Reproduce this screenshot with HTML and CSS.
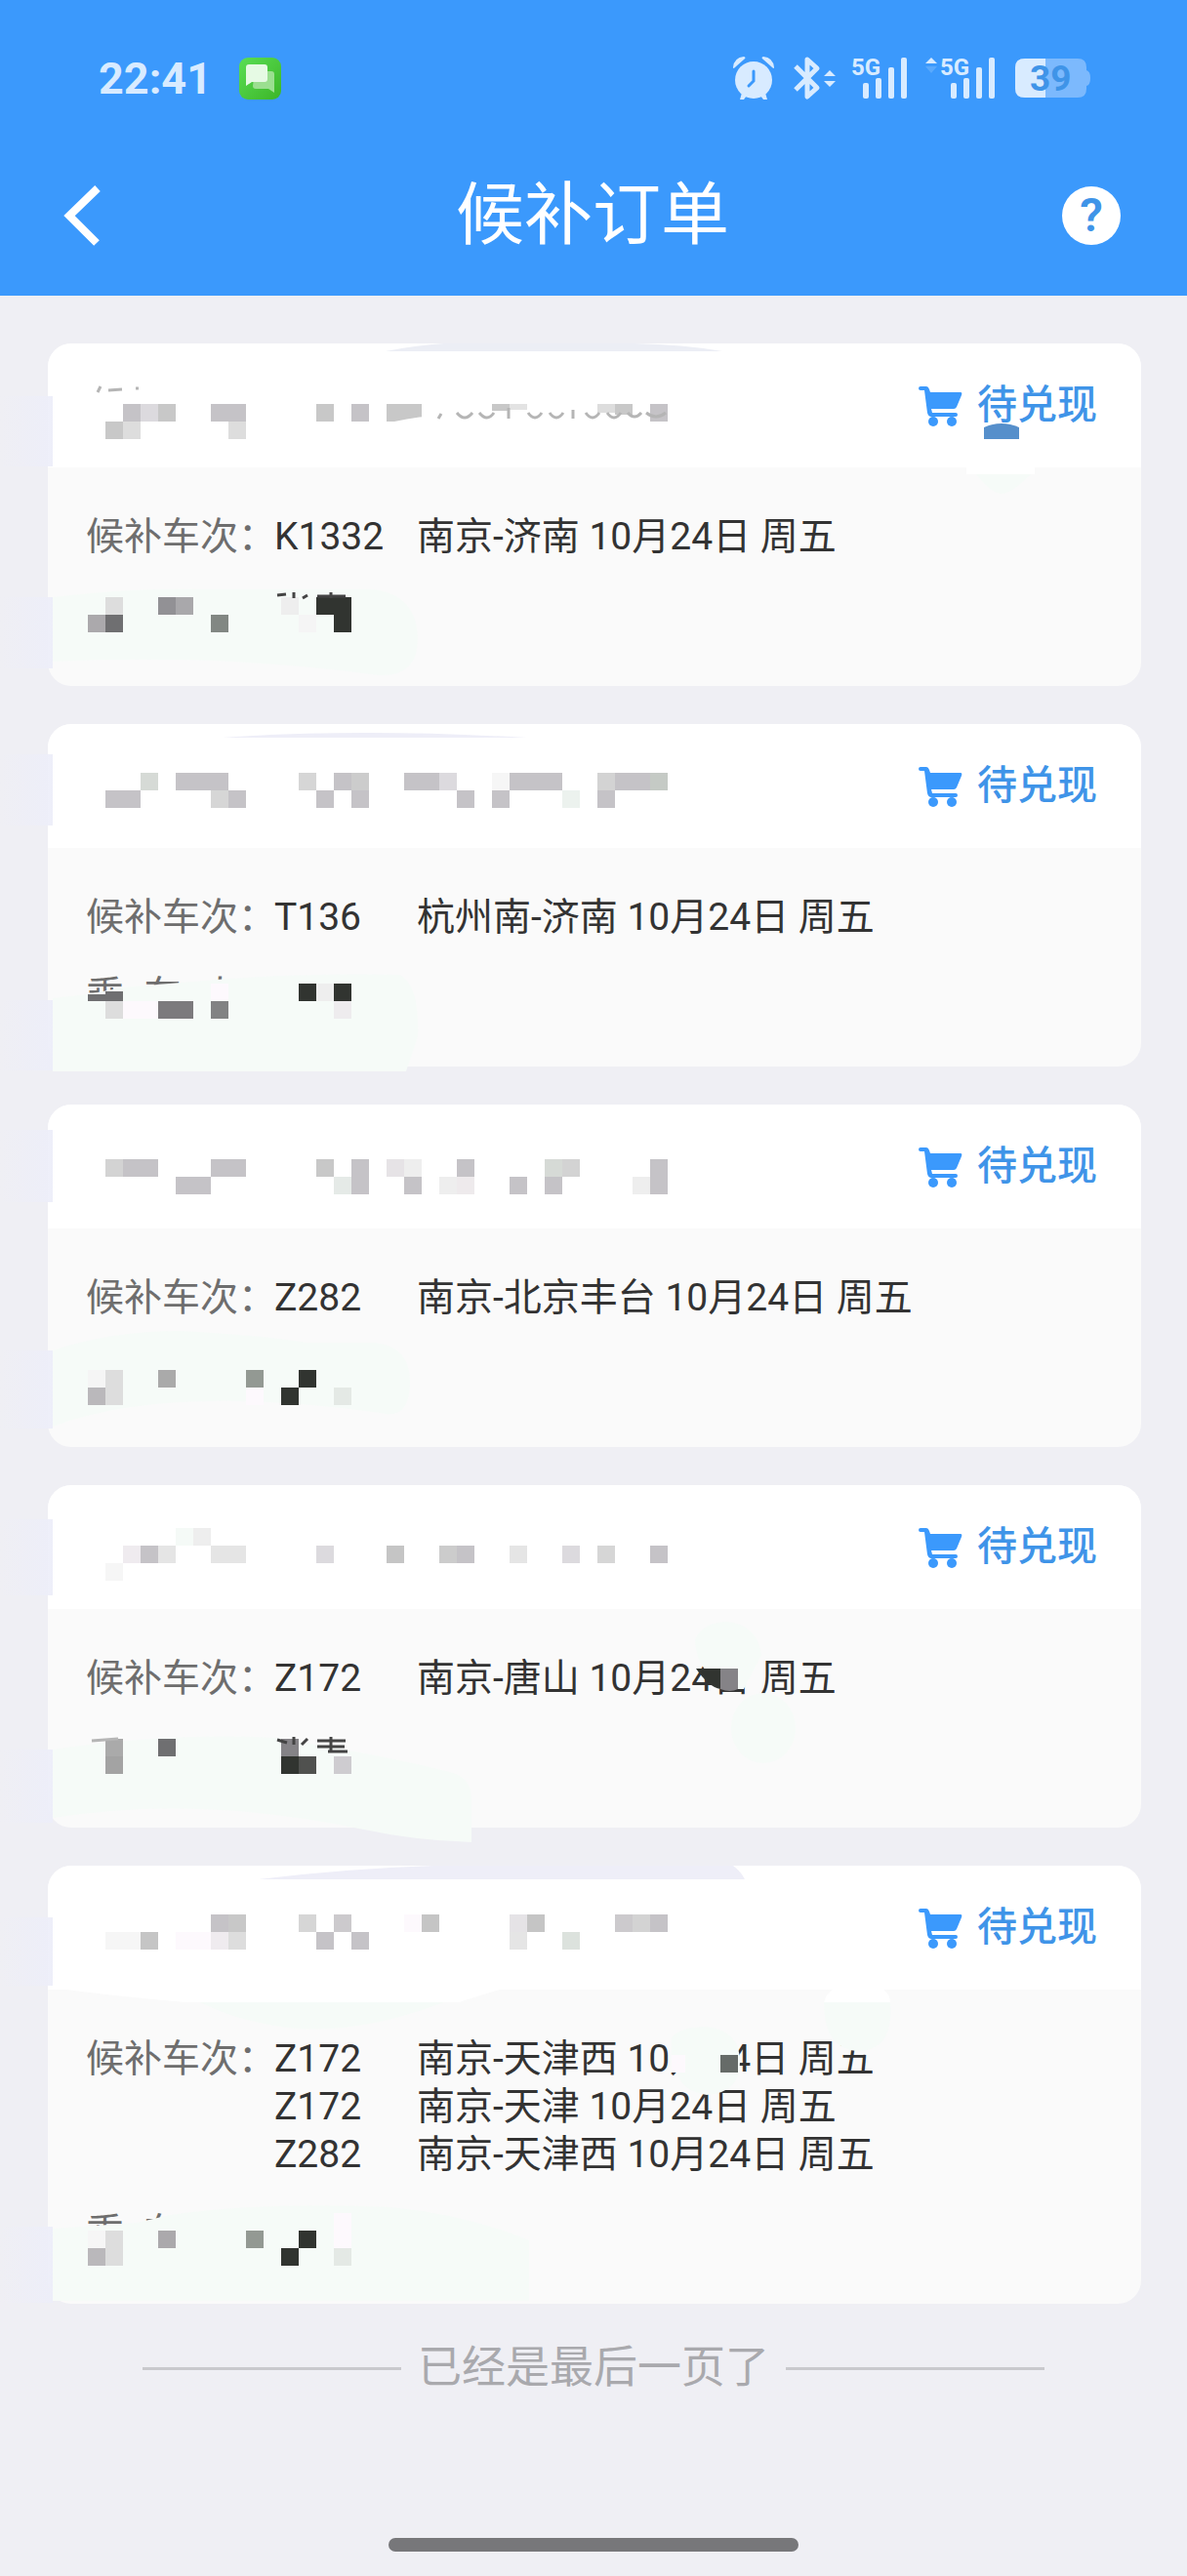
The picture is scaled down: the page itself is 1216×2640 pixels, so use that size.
FILE: index.html
```html
<!DOCTYPE html>
<html lang="zh-CN">

<head>
    <meta charset="UTF-8">
    <meta name="viewport" content="width=device-width, initial-scale=1.0">
    <title>候补订单</title>
    <link rel="stylesheet" href="styles.css">
</head>

<body>
    <!-- 图标定义 -->
    <svg class="defs" aria-hidden="true">
        <defs>
            <symbol id="cart" viewBox="0 0 45 42">
                <path d="M2 1h6q2 0 3 3l1 3h31q2 0 1 3l-5 12q-1 2-3 2H13l1 4h24q2 0 2 2t-2 2H13q-3 0-4-4L6 5H2Q0 5 0 3t2-2z" />
                <circle cx="15" cy="37" r="5" />
                <circle cx="34" cy="37" r="5" />
            </symbol>
            <symbol id="bars" viewBox="0 0 46 42">
                <rect x="0" y="26" width="6" height="16" rx="2" />
                <rect x="13" y="21" width="6" height="21" rx="2" />
                <rect x="26" y="10" width="6" height="32" rx="2" />
                <rect x="39" y="0" width="6" height="42" rx="2" />
            </symbol>
            <linearGradient id="green" x1="0" y1="0" x2="1" y2="1">
                <stop offset="0" stop-color="#5ade55" />
                <stop offset="1" stop-color="#3cb527" />
            </linearGradient>
            <linearGradient id="haze" x1="0" x2="1">
                <stop offset="0" stop-color="#edeef9" stop-opacity="0" />
                <stop offset="1" stop-color="#edeef9" />
            </linearGradient>
        </defs>
    </svg>

    <header class="top">
        <div class="status">
            <span class="time">22:41</span>
            <svg class="msg" width="43" height="43" viewBox="0 0 43 43">
                <rect width="43" height="43" rx="9" fill="url(#green)" />
                <path d="M16 14h17q3 0 3 3v19l-6-4H17q-3 0-3-3z" fill="#9bdf90" />
                <path d="M10 7h16q3 0 3 3v12q0 3-3 3H13l-6 4V10q0-3 3-3z" fill="#e6fae4" />
            </svg>
            <div class="status-right">
                <svg class="alarm" width="44" height="44" viewBox="0 0 44 44">
                    <circle cx="22" cy="24" r="19" />
                    <path d="M1 11Q2 1 12 0q3 1 0 3L3 11q-2 2-2 0zM43 11Q42 1 32 0q-3 1 0 3l9 8q2 2 2 0zM10 37l5 3-3 4H8zM34 37l-5 3 3 4h4z" />
                    <path d="M22 15v10l-5 5" fill="none" stroke="#3b99fc" stroke-width="3" stroke-linecap="round" />
                </svg>
                <svg class="bt" width="44" height="44" viewBox="0 0 44 44">
                    <path d="M2 10l22 22-10 9V3l10 9L2 34" fill="none" stroke="#d8ebff" stroke-width="5" stroke-linejoin="round" />
                    <path d="M31 20l6-6 6 6zM31 25h12l-6 6z" />
                </svg>
                <svg class="sim" width="58" height="44" viewBox="0 0 58 44">
                    <text x="0" y="19">5G</text>
                    <use href="#bars" x="12" y="1" width="46" height="42" />
                </svg>
                <svg class="sim sim2" width="72" height="44" viewBox="0 0 72 44">
                    <path d="M0 7l6-6 6 6z" />
                    <path d="M0 10h12l-6 7z" opacity=".2" />
                    <text x="15" y="19">5G</text>
                    <use href="#bars" x="26" y="1" width="46" height="42" />
                </svg>
                <svg class="battery" width="78" height="40" viewBox="0 0 78 40">
                    <path d="M10 0h54q9 0 9 9v3q4 1 4 8t-4 8v3q0 9-9 9H10q-10 0-10-9V9q0-9 10-9z" fill="#7cb9fd" />
                    <path d="M31 0v40H10Q0 40 0 31V9q0-9 10-9z" fill="#d8ebff" />
                    <text x="15" y="33">39</text>
                </svg>
            </div>
        </div>
        <nav class="navbar">
            <button class="back" aria-label="返回">
                <svg width="40" height="56" viewBox="0 0 40 56">
                    <path d="M34 0L5 28l28 28" fill="none" stroke="#fff" stroke-width="8" />
                </svg>
            </button>
            <h1>候补订单</h1>
            <button class="help" aria-label="帮助">?</button>
        </nav>
    </header>

    <main class="orders">
        <section class="card">
            <div class="card-head">
                <svg class="cart"><use href="#cart" /></svg>
                <span>待兑现</span>
            </div>
            <div class="card-body">
                <div class="row">
                    <span class="label">候补车次：</span>
                    <span class="train">K1332</span>
                    <span>南京-济南 10月24日 周五</span>
                </div>
            </div>
            <svg class="cover" aria-hidden="true">
                <g transform="translate(-49 -352)">
                    <path d="M395 360q30-6 60-8h195q50 1 90 8z" fill="#eceef5" />
                    <path d="M0 406h54v72H0zM0 612h54v73H0z" fill="url(#haze)" />
                    <path d="M54 612q80-10 160-8h150q62-4 64 50 0 40-40 38-160-22-334-14z" fill="#f6fbf8" />
                    <path d="M990 478h70v8h-70z" fill="#fff" />
                    <path d="M1000 486h56q-20 20-30 20t-26-20z" fill="#f6fbf8" />
                    <g data-mosaic="0"></g>
                    <path d="M1008 450v-12q18-8 36 0v12z" fill="#568fcb" />
                    <path d="M404 432q26-6 50-6v6z" fill="#fff" />
                    <path d="M452 424l-3 5M468 423q8 10 16 0M491 423q8 10 15 0M521 418v11M541 423q7 10 14 0M563 423q7 10 14 0M587 420v9M600 423q7 10 14 0M622 423q7 10 14 0M643 423q7 8 14 0M662 423q10 8 20 0M100 402l3-6M111 400l14-1M139 398h3" class="mark" />
                    <path d="M284 610l9-1M301 607v6M310 613l5-3M325 611h29M339 607v6" class="mark dark" />
                </g>
            </svg>
        </section>

        <section class="card">
            <div class="card-head">
                <svg class="cart"><use href="#cart" /></svg>
                <span>待兑现</span>
            </div>
            <div class="card-body">
                <div class="row">
                    <span class="label">候补车次：</span>
                    <span class="train">T136</span>
                    <span>杭州南-济南 10月24日 周五</span>
                </div>
                <div class="row">
                    <span class="label spread"><i>乘</i><i>车</i><i>人</i></span>
                </div>
            </div>
            <svg class="cover" aria-hidden="true">
                <g transform="translate(-49 -742)">
                    <path d="M228 756q140-10 312 0z" fill="#eeeef8" />
                    <path d="M0 773h54v73H0zM0 1025h54v72H0z" fill="url(#haze)" />
                    <path d="M54 1023l36-4 36-7 24-2 84-7q90-6 176-4 20 12 18 63l-12 36H54z" fill="#f6fbf8" />
                    <g data-mosaic="1"></g>
                </g>
            </svg>
        </section>

        <section class="card">
            <div class="card-head">
                <svg class="cart"><use href="#cart" /></svg>
                <span>待兑现</span>
            </div>
            <div class="card-body">
                <div class="row">
                    <span class="label">候补车次：</span>
                    <span class="train">Z282</span>
                    <span>南京-北京丰台 10月24日 周五</span>
                </div>
            </div>
            <svg class="cover" aria-hidden="true">
                <g transform="translate(-49 -1132)">
                    <path d="M0 1158h54v74H0zM0 1384h54v80H0z" fill="url(#haze)" />
                    <path d="M54 1384q60-20 130-20 80 4 130 12h70q36 4 36 40 0 40-30 32-220-30-336 14z" fill="#f6fbf8" />
                    <g data-mosaic="2"></g>
                </g>
            </svg>
        </section>

        <section class="card">
            <div class="card-head">
                <svg class="cart"><use href="#cart" /></svg>
                <span>待兑现</span>
            </div>
            <div class="card-body">
                <div class="row">
                    <span class="label">候补车次：</span>
                    <span class="train">Z172</span>
                    <span>南京-唐山 10月24日 周五</span>
                </div>
            </div>
            <svg class="cover" aria-hidden="true">
                <g transform="translate(-49 -1522)">
                    <path d="M0 1557h54v78H0zM0 1793h54v75H0z" fill="url(#haze)" />
                    <path d="M54 1793q120-18 230-12 120 20 180 36 20 6 19 30v41q-60-2-110-13-170-36-319-12z" fill="#f6fbf8" />
                    <path d="M712 1680q8-18 34-18 30 4 34 34l-18 35h-26l-18-26q-6-12-6-25z" fill="#f6fbf8" />
                    <ellipse cx="782" cy="1771" rx="33" ry="36" fill="#f6fbf8" />
                    <g data-mosaic="3"></g>
                    <path d="M713 1710h25v21q-12-2-25-21z" fill="#313430" />
                    <path d="M738 1710h18v21q-8 4-18 0z" fill="#858387" />
                    <path d="M94 1784l27-2" class="mark" />
                    <path d="M284 1783l10 3M301 1780v8M309 1788l6-6M325 1784h29M339 1780v15M325 1790h28M336 1795h20" class="mark dark" />
                </g>
            </svg>
        </section>

        <section class="card">
            <div class="card-head">
                <svg class="cart"><use href="#cart" /></svg>
                <span>待兑现</span>
            </div>
            <div class="card-body">
                <div class="row">
                    <span class="label">候补车次：</span>
                    <span class="train">Z172</span>
                    <span>南京-天津西 10月24日 周五</span>
                    <span class="train">Z172</span>
                    <span>南京-天津 10月24日 周五</span>
                    <span class="train">Z282</span>
                    <span>南京-天津西 10月24日 周五</span>
                </div>
                <div class="row">
                    <span class="label spread"><i>乘</i><i>车</i></span>
                </div>
            </div>
            <svg class="cover" aria-hidden="true">
                <g transform="translate(-49 -1912)">
                    <path d="M265 1926q90-11 180-14h306q8 6 12 14z" fill="#eeeef8" />
                    <path d="M0 1965h54v70H0zM0 2282h54v78H0z" fill="url(#haze)" />
                    <path d="M60 2038q60 8 130 14h280l45-14z" fill="#fff" />
                    <path d="M205 2052h250q-90 34-160 26-50-6-90-26z" fill="#f6fbf8" />
                    <path d="M844 2052q2-8 10-14h50q8 6 8 14z" fill="#fff" />
                    <path d="M844 2052h68q4 50-34 50-34-2-34-50z" fill="#f6fbf8" />
                    <path d="M688 2088q10-11 36-11 34 4 34 36t-34 34q-26-4-30-23h-6z" fill="#f6fbf8" />
                    <path d="M54 2284l86-6 34-8q100-14 226-8 80 8 142 34v62H54z" fill="#f6fbf8" />
                    <path d="M688 2106h14v18h-14z" fill="#fdf9fd" />
                    <g data-mosaic="4"></g>
                    <rect x="738" y="2106" width="18" height="18" fill="#666b68" />
                </g>
            </svg>
        </section>
    </main>

    <footer class="end">已经是最后一页了</footer>
    <div class="home-bar"></div>

    <script src="script.js"></script>
</body>

</html>
```
FILE: styles.css
```css
* {
    box-sizing: border-box;
}

body {
    margin: 0;
    min-height: 100vh;
    display: flex;
    flex-direction: column;
    background-color: #efeff4;
    color: #333;
    font-family: Roboto, "Noto Sans CJK SC", sans-serif;
    font-size: 39px;
    line-height: 49px;
}

svg {
    display: block;
    flex: none;
    overflow: visible;
}

button {
    border: none;
    background: none;
    padding: 0;
    font-family: inherit;
    cursor: pointer;
}

.defs {
    position: absolute;
    width: 0;
    height: 0;
}

.top {
    background-color: #3b99fc;
    color: #fff;
    padding: 56px 0 32px;
}

/* 状态栏 */
.status {
    display: flex;
    align-items: center;
    height: 48px;
    padding: 0 98px 0 101px;
    fill: #d8ebff;
}

.time {
    color: #d8ebff;
    font-size: 45px;
    font-weight: 700;
}

.msg {
    margin-left: 28px;
}

.status-right {
    display: flex;
    align-items: center;
    margin-left: auto;
}

.bt {
    margin-left: 19px;
}

.sim {
    margin-left: 15px;
    font-size: 24px;
    font-weight: 700;
}

.sim2 {
    margin-left: 18px;
}

.battery {
    margin-left: 20px;
    fill: #3f94e8;
    font-size: 37px;
    font-weight: 700;
}

/* 标题栏 */
.navbar {
    display: flex;
    align-items: center;
    justify-content: space-between;
    height: 100px;
    margin-top: 67px;
    padding: 0 68px 0 66px;
}

.back {
    width: 60px;
}

h1 {
    margin: 0;
    font-size: 70px;
    font-weight: 400;
    line-height: 100px;
}

.help {
    width: 60px;
    height: 60px;
    border-radius: 50%;
    background-color: #fff;
    color: #3f94e8;
    font-size: 48px;
    font-weight: 600;
    line-height: 60px;
}

/* 订单列表 */
.orders {
    display: flex;
    flex-direction: column;
    gap: 39px;
    padding: 49px 47px 0 49px;
}

.card {
    position: relative;
    border-radius: 24px;
    background-color: #fafafa;
}

.card-head {
    display: flex;
    align-items: center;
    justify-content: flex-end;
    gap: 15px;
    height: 127px;
    padding-right: 45px;
    border-radius: 24px 24px 0 0;
    background-color: #fff;
    color: #3f94e8;
    font-size: 41px;
    font-weight: 500;
}

.cart {
    width: 45px;
    height: 42px;
    fill: #3b99fc;
}

.card-body {
    display: flex;
    flex-direction: column;
    gap: 31px;
    min-height: 224px;
    padding: 47px 39px;
}

.card:last-child .card-body {
    min-height: 322px;
}

.row {
    display: grid;
    grid-template-columns: 193px 146px 1fr;
    color: #333;
}

.train {
    grid-column: 2;
}

.label {
    color: #6e6e6e;
    white-space: nowrap;
}

.spread {
    display: flex;
    gap: 20px;
}

.spread i {
    font-style: normal;
}

/* 信息遮挡层 */
.cover {
    position: absolute;
    top: 0;
    left: 0;
    width: 100%;
    height: 100%;
    pointer-events: none;
}

.mark {
    fill: none;
    stroke: #b5b5b5;
    stroke-width: 3;
}

.dark {
    stroke: #444;
}

/* 底部 */
.end {
    display: flex;
    align-items: center;
    gap: 17px;
    margin-top: 36px;
    padding: 0 146px;
    color: #a9a9ad;
    font-size: 45px;
    line-height: 60px;
}

.end::before,
.end::after {
    content: "";
    flex: 1;
    height: 3px;
    background-color: #c9c9cd;
}

.home-bar {
    width: 420px;
    height: 14px;
    margin: auto auto 25px;
    border-radius: 7px;
    background-color: #77777a;
}
```
FILE: script.js
```js
// 马赛克：每格 18px，格式为 "列[-列]:颜色"
const CELL = 18;
const mosaics = [
    {
        23: '7:c5c3c7 8:dcdade 9:c8c8c8 12-13:c5c3c7 18:c8c8c8 20:c5c3c7 22-23:c8c8c8 37:c5c3c7',
        24: '6:c8c8c8 7:dddddd 13:dddddd',
        34: '6:dddddd 9:929195 10:a9a8ab 16:eeeeee 18-19:313430',
        35: '5:aba9ac 6:6f6f71 12:828783 17:f5f5f5 19:313430'
    },
    {
        44: '8:d6dad6 10-12:c5c3c7 17:d6d6d6 19:c5c3c7 20:cccccc 23-24:c5c3c7 25:dcdade 28:f6f6f6 29-31:c5c3c7 34:d3d3d3 35-36:c5c3c7 37:c5cac5',
        45: '6-7:c5c3c7 12:d6d6d6 13:c5c3c7 18:c5c3c7 20:c5c3c7 26:c5c3c7 28:c5c3c7 32:ecf2ee 34:c5c3c7',
        56: '12:fdf9fd 17:313430 18:eeeeee 19:313430',
        57: '6:dddddd 7-8:fdf9fd 9-10:7c7a7d 12:828283 19:eeecee'
    },
    {
        66: '6:d3d3d3 7-8:c5c3c7 12-13:c5c3c7 18:c8c8c8 20:c5c3c7 22:e6e3e6 23:eeeeee 26:c5c3c7 31:d6dad6 32:d3d3d3 37:c5c3c7',
        67: '10-11:c5c3c7 19:e5eae7 20:c5c3c7 23:c5c3c7 25:eeeeee 26:eeeaec 29:c5c3c7 31:c5c3c7 36:eeeeee 37:c5c3c7',
        78: '5:f5f5f5 6:dddddd 9:aaaaaa 14:939993 17:313430',
        79: '5:bab8bb 6:dddddd 14:fdf9fd 16:313430 19:e4e9e5'
    },
    {
        87: '10:f5faf7 11:eeeeee',
        88: '7:efebef 8:c5c3c7 9:e5e5e5 12-13:e5e5e5 18:dcdade 22:c5c5c5 25:cccccc 26:c5c3c7 29:e5e5e5 32:dcdade 34:d6d6d6 37:c5c3c7',
        89: '6:f6f6f6',
        99: '6:aaaaaa 9:6f6f71 16:858387',
        100: '6:a3a3a3 16:313430 17:50514f 19:ceccd0'
    },
    {
        109: '12:c5c3c7 13:c8c8c8 17:d6d6d6 19:cccacd 23:fdf9fd 24:c5c5c5 29:e5e3e6 30:c5c5c5 35:cccacd 36:d3d3d3 37:c5c3c7',
        110: '6-7:f6f6f6 8:c5c5c5 10-11:fdf9fd 12:efebef 13:dddddd 18:c5c3c7 20:c5c3c7 29:e5e5e5 32:dce2dd',
        126: '19:fdf9fd',
        127: '5:f6f6f6 6:dddddd 9:aba9ac 14:939993 17:313430 19:fdf9fd',
        128: '5:bab8bb 6:dddddd 16:313430 19:e4e9e5'
    }
];

// 只露出一部分的格子：[列, 行, 顶部偏移, 高度, 颜色]
const partial = [
    [[28, 23, 0, 7, 'c8c8c8'], [29, 23, 0, 6, 'e3e3e3'], [34, 23, 0, 9, 'dddddd'], [35, 23, 0, 11, 'c8c8c8']],
    [[5, 56, 11, 7, '6f6f71'], [6, 56, 8, 10, '6f6f71']],
    [], [], []
];

function rect(x, y, w, h, color) {
    return `<rect x="${x}" y="${y}" width="${w}" height="${h}" fill="#${color}"/>`;
}

document.querySelectorAll('[data-mosaic]').forEach(group => {
    const index = Number(group.dataset.mosaic);
    let html = '';
    for (const [row, line] of Object.entries(mosaics[index])) {
        line.split(' ').forEach(item => {
            const [cols, color] = item.split(':');
            const [from, to = from] = cols.split('-').map(Number);
            html += rect(from * CELL, row * CELL, (to - from + 1) * CELL, CELL, color);
        });
    }
    partial[index].forEach(([col, row, top, height, color]) => {
        html += rect(col * CELL, row * CELL + top, CELL, height, color);
    });
    group.innerHTML = html;
});
```
